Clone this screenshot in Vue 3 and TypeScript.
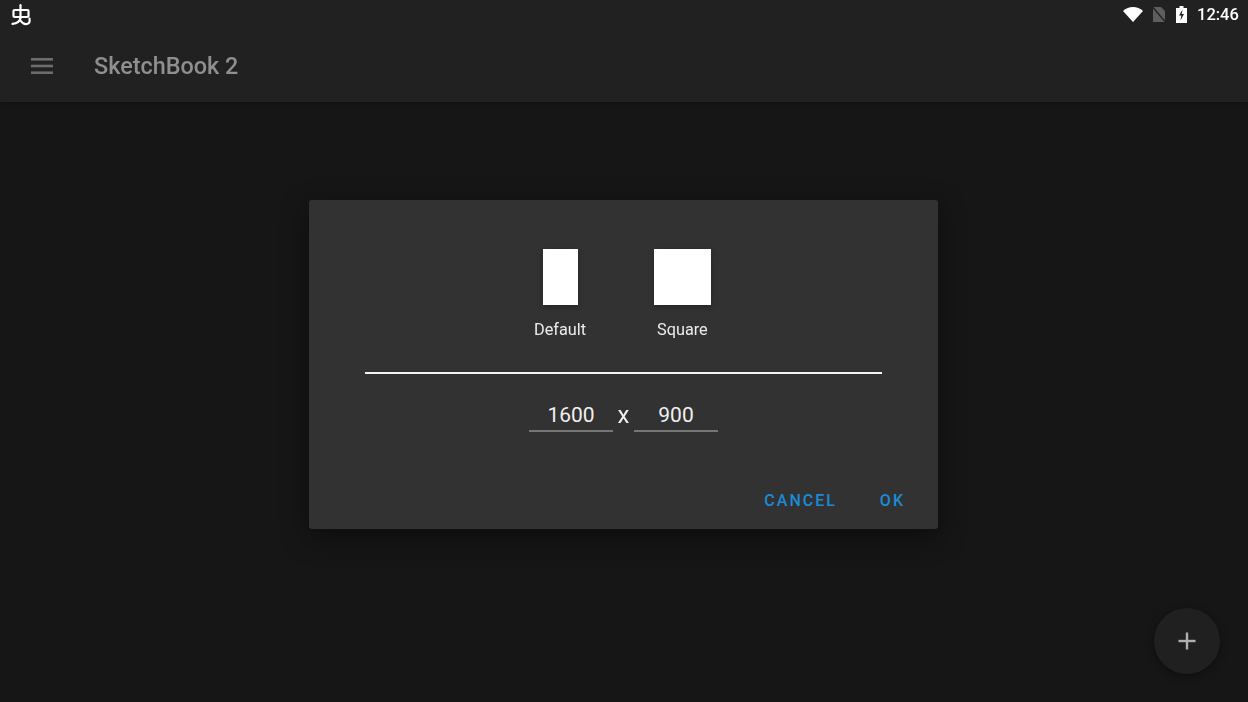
<script setup lang="ts">
const presets = [
  { label: 'Default', kind: 'portrait' },
  { label: 'Square', kind: 'square' },
]
</script>

<template>
  <div class="screen">
    <header class="topbar">
      <div class="status">
        <svg class="logo" width="22" height="24" viewBox="0 0 22 24" fill="none" stroke="#fff" stroke-width="2.200" stroke-linecap="round" stroke-linejoin="round">
          <path d="M10.500 2.200V15" />
          <rect x="3.500" y="7" width="15" height="7" rx="1" />
          <path d="M2.500 20.800C6 20.500 9.500 19.500 10.500 15M10.500 17.500C12 20 14.500 21.500 17 21 19.500 20.500 20 18.500 19.500 15.500" />
        </svg>
        <div class="status-right">
          <svg width="20" height="15" viewBox="0 0 20 15"><path d="M0 4C2.800 1.500 6.200 0 10 0s7.200 1.500 10 4L10 15z" fill="#fff" /></svg>
          <svg width="14" height="15" viewBox="0 0 14 15">
            <path d="M1 0h8l4 4v11H1z" fill="#5e5e5e" />
            <path d="M0.500 0L13.500 15" stroke="#212121" stroke-width="1.400" />
          </svg>
          <svg width="11" height="17" viewBox="0 0 11 17">
            <path d="M3.500 0h4v2H11v15H0V2h3.500z" fill="#fff" />
            <path d="M6.500 3.500L3 9.500h2.300L4.500 14.500 8 8H5.700z" fill="#212121" />
          </svg>
          <span class="time">12:46</span>
        </div>
      </div>
      <div class="appbar">
        <svg class="menu" width="22" height="16" viewBox="0 0 22 16" fill="#6d6d6d">
          <rect x="0" y="0" width="22" height="2.600" />
          <rect x="0" y="6.700" width="22" height="2.600" />
          <rect x="0" y="13.400" width="22" height="2.600" />
        </svg>
        <span class="title">SketchBook 2</span>
      </div>
    </header>

    <main class="content">
      <section class="dialog">
        <div class="presets">
          <div v-for="p in presets" :key="p.label" class="preset">
            <div class="swatch-box"><div class="swatch" :class="p.kind"></div></div>
            <span class="preset-label">{{ p.label }}</span>
          </div>
        </div>
        <div class="divider"></div>
        <div class="size-row">
          <div class="field"><span class="soft">1600</span></div>
          <span class="times soft">x</span>
          <div class="field"><span class="soft">900</span></div>
        </div>
        <div class="actions">
          <button class="action"><span class="soft">CANCEL</span></button>
          <button class="action"><span class="soft">OK</span></button>
        </div>
      </section>
      <button class="fab" aria-label="Add">
        <svg width="18" height="18" viewBox="0 0 18 18" fill="#b0b0b0">
          <rect x="7.800" y="0.500" width="2.400" height="17" />
          <rect x="0.500" y="7.800" width="17" height="2.400" />
        </svg>
      </button>
    </main>
  </div>
</template>

<style>
html, body { margin: 0; background: #161616; }
</style>

<style scoped>
.screen {
  width: 1248px;
  height: 702px;
  display: flex;
  flex-direction: column;
  overflow: hidden;
  background: #161616;
  font-family: Roboto, "Liberation Sans", sans-serif;
  position: relative;
}
.topbar {
  height: 102px;
  flex: none;
  background: #212121;
  box-shadow: 0 1px 3px rgba(0, 0, 0, 0.35);
  box-sizing: border-box;
}
.status {
  height: 29px;
  display: flex;
  align-items: center;
  justify-content: space-between;
  padding: 0 9px 0 10px;
}
.status-right {
  display: flex;
  align-items: center;
}
.status-right svg:nth-child(1) { margin-right: 9px; }
.status-right svg:nth-child(2) { margin-right: 10px; }
.status-right svg:nth-child(3) { margin-right: 10px; }
.time {
  color: #fff;
  font-size: 16.500px;
  font-weight: 500;
  line-height: 29px;
  width: 42px;
  white-space: nowrap;
  will-change: transform;
}
.appbar {
  height: 73px;
  display: flex;
  align-items: center;
  padding-left: 31px;
}
.menu { margin-right: 41px; margin-top: 1px; }
.title {
  color: #8f8f8f;
  font-size: 23.400px;
  font-weight: 500;
  margin-top: 1px;
  will-change: transform;
}
.soft { will-change: transform; }
.content {
  flex: 1;
  display: flex;
  justify-content: center;
  align-items: flex-start;
  padding-top: 98px;
  position: relative;
}
.dialog {
  width: 629px;
  height: 329px;
  margin-right: 1px;
  box-sizing: border-box;
  background: #323232;
  border-radius: 3px;
  box-shadow: 0 8px 28px rgba(0, 0, 0, 0.45);
  padding: 49px 56px 0;
  display: flex;
  flex-direction: column;
}
.presets {
  display: flex;
  justify-content: center;
  gap: 68px;
  margin-right: 4px;
  height: 123px;
  flex: none;
}
.preset {
  display: flex;
  flex-direction: column;
  align-items: center;
  width: 54px;
}
.swatch-box {
  height: 56px;
  display: flex;
  justify-content: center;
}
.swatch {
  height: 56px;
  background: #fff;
  box-shadow: 0 2px 6px rgba(0, 0, 0, 0.3);
  flex: none;
}
.swatch.portrait { width: 35px; }
.swatch.square { width: 57px; }
.preset-label {
  margin-top: 14px;
  color: #ececec;
  font-size: 16.300px;
  line-height: 21px;
  white-space: nowrap;
  will-change: transform;
}
.divider {
  height: 2px;
  background: #f4f4f4;
  flex: none;
}
.size-row {
  display: flex;
  justify-content: center;
  align-items: flex-start;
  margin-top: 26px;
}
.field {
  width: 84px;
  height: 32px;
  box-sizing: border-box;
  border-bottom: 2px solid #767676;
  color: #f0f0f0;
  font-size: 21px;
  line-height: 30px;
  text-align: center;
}
.times {
  width: 21px;
  color: #f0f0f0;
  font-size: 24px;
  line-height: 30px;
  text-align: center;
}
.actions {
  display: flex;
  justify-content: flex-end;
  gap: 43px;
  margin-top: 59px;
  margin-right: -23px;
}
.action {
  background: none;
  border: 0;
  padding: 0;
  color: #1a8cd6;
  font-family: inherit;
  font-size: 16px;
  font-weight: 500;
  letter-spacing: 2px;
  line-height: 20px;
}
.fab {
  position: absolute;
  left: 1154px;
  top: 506px;
  width: 66px;
  height: 66px;
  border: 0;
  padding: 0;
  border-radius: 50%;
  background: #202020;
  box-shadow: 0 2px 8px rgba(0, 0, 0, 0.4);
  display: flex;
  align-items: center;
  justify-content: center;
}
</style>
